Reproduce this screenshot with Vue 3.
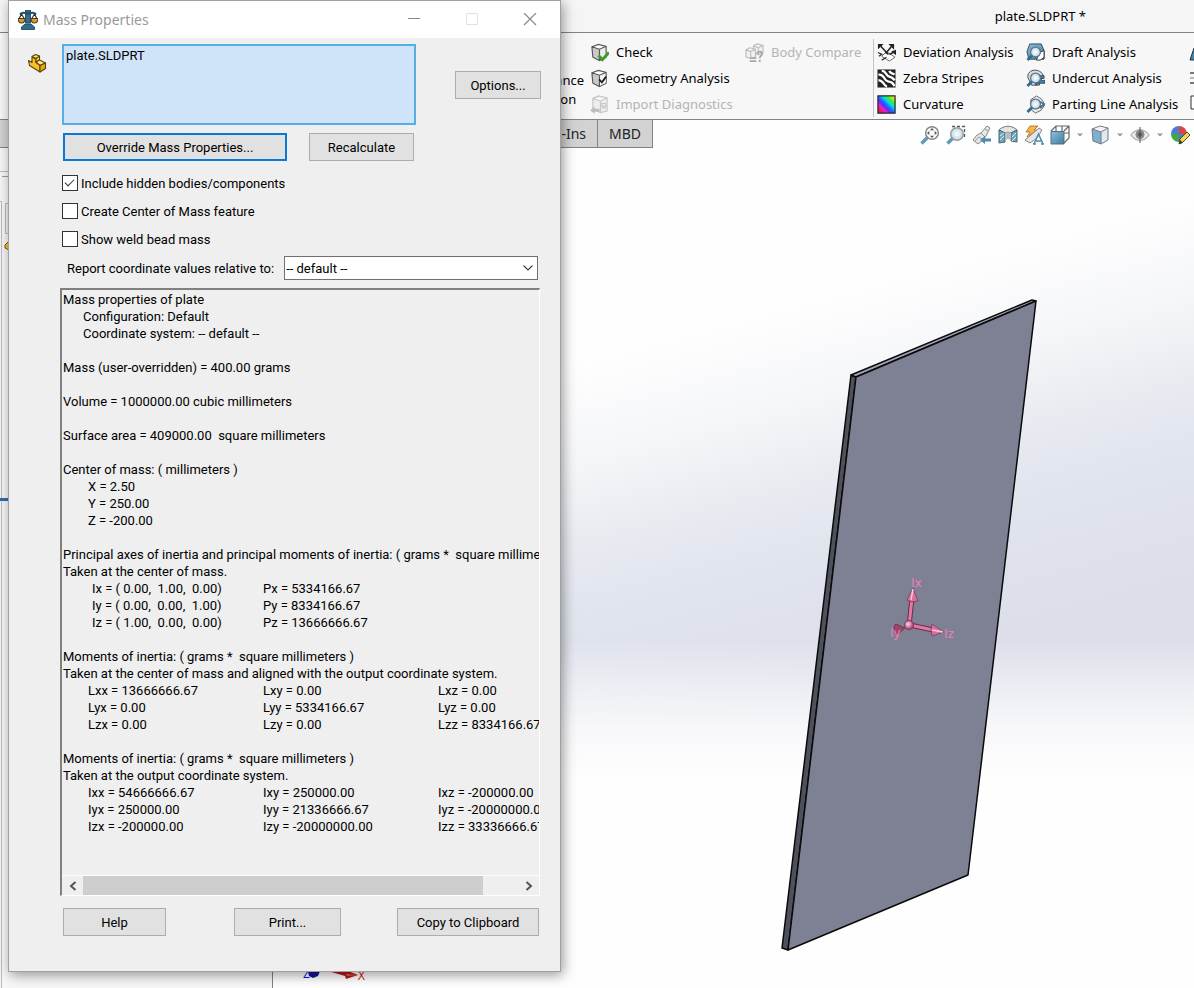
<script setup>
import { ref } from 'vue'

const includeHidden = ref(true)
const createFeature = ref(false)
const showWeld = ref(false)
const coordSystem = ref('default')

const ribbonGroups = [
  [
    { label: 'Check', icon: 'i-check' },
    { label: 'Geometry Analysis', icon: 'i-geometry' },
    { label: 'Import Diagnostics', icon: 'i-import', disabled: true },
  ],
  [{ label: 'Body Compare', icon: 'i-compare', disabled: true }],
  [
    { label: 'Deviation Analysis', icon: 'i-deviation' },
    { label: 'Zebra Stripes', icon: 'i-zebra' },
    { label: 'Curvature', icon: 'i-curvature' },
  ],
  [
    { label: 'Draft Analysis', icon: 'i-draft' },
    { label: 'Undercut Analysis', icon: 'i-undercut' },
    { label: 'Parting Line Analysis', icon: 'i-parting' },
  ],
]

const viewTools = [
  { label: 'Zoom to Fit', icon: 'v-fit' },
  { label: 'Zoom to Area', icon: 'v-area' },
  { label: 'Previous View', icon: 'v-previous' },
  { label: 'Section View', icon: 'v-section' },
  { label: 'Dynamic Annotation Views', icon: 'v-annotation' },
  { label: 'View Orientation', icon: 'v-orientation', menu: true },
  { label: 'Display Style', icon: 'v-display', menu: true },
  { label: 'Hide/Show Items', icon: 'v-eye', menu: true },
  { label: 'Edit Appearance', icon: 'v-appearance' },
]

const surfaceArea = 'Surface area = 409000.00  square millimeters'
const principalTitle =
  'Principal axes of inertia and principal moments of inertia: ( grams *  square millimeters )'
const momentsTitle = 'Moments of inertia: ( grams *  square millimeters )'

const principal = [
  ['Ix = ( 0.00,  1.00,  0.00)', 'Px = 5334166.67'],
  ['Iy = ( 0.00,  0.00,  1.00)', 'Py = 8334166.67'],
  ['Iz = ( 1.00,  0.00,  0.00)', 'Pz = 13666666.67'],
]
const centroidal = [
  ['Lxx = 13666666.67', 'Lxy = 0.00', 'Lxz = 0.00'],
  ['Lyx = 0.00', 'Lyy = 5334166.67', 'Lyz = 0.00'],
  ['Lzx = 0.00', 'Lzy = 0.00', 'Lzz = 8334166.67'],
]
const output = [
  ['Ixx = 54666666.67', 'Ixy = 250000.00', 'Ixz = -200000.00'],
  ['Iyx = 250000.00', 'Iyy = 21336666.67', 'Iyz = -20000000.00'],
  ['Izx = -200000.00', 'Izy = -20000000.00', 'Izz = 33336666.67'],
]
</script>

<template>
  <svg class="sprite" aria-hidden="true">
    <defs>
      <linearGradient id="g-curve" x1="0" y1="1" x2="1" y2="0">
        <stop offset=".08" stop-color="#f01030" />
        <stop offset=".26" stop-color="#f020c0" />
        <stop offset=".4" stop-color="#5030ff" />
        <stop offset=".52" stop-color="#1080ff" />
        <stop offset=".62" stop-color="#00e0e0" />
        <stop offset=".74" stop-color="#30f040" />
        <stop offset=".92" stop-color="#f0e020" />
      </linearGradient>
      <linearGradient id="g-steel" x1="0" y1="0" x2="1" y2="1">
        <stop offset="0" stop-color="#8fc0da" />
        <stop offset="1" stop-color="#3d7c9e" />
      </linearGradient>
      <radialGradient id="g-lens"><stop offset="0" stop-color="#fff" /><stop offset="1" stop-color="#b9d6e6" /></radialGradient>
      <radialGradient id="g-pink" cx=".4" cy=".4"><stop offset="0" stop-color="#ffd6ea" /><stop offset="1" stop-color="#b4557f" /></radialGradient>
    </defs>
    <symbol id="i-cube" viewBox="0 0 20 20">
      <path d="M2 4 9 1.500 17 3.500 10 6.500Z" fill="#fff" />
      <path d="M2 4 10 6.500V18.500L3 15Z" fill="#c9c9c9" />
      <path d="M10 6.500 17 3.500V15L10 18.500Z" fill="#ececec" />
      <path d="M2 4 9 1.500 17 3.500V15L10 18.500 3 15ZM2 4l8 2.500 7-3M10 6.500V18.500" fill="none" stroke="#555" stroke-width="1.200" />
    </symbol>
    <symbol id="i-check" viewBox="0 0 20 20">
      <use href="#i-cube" width="20" height="20" />
      <path d="M9 13l4 4.500L20 10" fill="none" stroke="#3a9a22" stroke-width="3" />
    </symbol>
    <symbol id="i-geometry" viewBox="0 0 20 20">
      <use href="#i-cube" width="20" height="20" />
      <path d="M10.500 7h6V14.500l-6 3Z" fill="#f6f6f6" />
      <path d="M9.500 11l3 3L17 8" fill="none" stroke="#222" stroke-width="2" />
    </symbol>
    <symbol id="i-import" viewBox="0 0 20 20">
      <g fill="#eee" stroke="#c6c6c6" stroke-width="1.200">
        <path d="M3 3.500 9 1l9 2v14l-7 1.500L3 15ZM3 3.500l8 3 7-3.500M11 6.500v12" />
        <path d="M12.500 9h4v3h-4zM12.500 13.500h4" />
      </g>
      <path d="M0 16l5-4v2.500h5v3H5V20Z" fill="#bdbdbd" />
    </symbol>
    <symbol id="i-compare" viewBox="0 0 20 20">
      <g fill="#f1f1f1" stroke="#bcbcbc" stroke-width="1.200">
        <path d="M9 3l4-2 6 1.500v8l-5 2-5-2ZM9 3l5 2 5-2.500M14 5v7" />
        <path d="M1 7l4-2 6 1.500v8l-5 2-5-2ZM1 7l5 2 5-2.500M6 9v7" />
      </g>
      <path d="M5 16h7M5 19h7" stroke="#aaa" stroke-width="1.800" />
      <path d="M13 11.500c0-3 5-3 5 0 0 2-2.500 2-2.500 4.500M15.500 17.500V20" fill="none" stroke="#aaa" stroke-width="2" />
    </symbol>
    <symbol id="i-deviation" viewBox="0 0 20 20">
      <path d="M5 14l5-5 9 6-6 4Z" fill="#fff" stroke="#666" />
      <path d="M12 12 4 3.500M9 11l6-7M13 12l4-2" stroke="#222" stroke-width="1.600" />
      <path d="M1 1h6L1 6.500ZM18 1h-6l6 6ZM20 7v6l-5-4Z" fill="#222" />
      <path d="M1 10l4 2-3 2M5 18l5-3" fill="none" stroke="#333" stroke-width="1.400" />
    </symbol>
    <symbol id="i-zebra" viewBox="0 0 20 20">
      <path d="M.5.5h19v19H.5z" fill="#222" />
      <path d="M1.500 6c7-1 5 6 10 7s5 2 7 5M5 2c5 0 4 5 8 6s4 2 5.500 4M1.500 12c5-1 5 5 9 6.500M13 2c1 3 3 2 5.500 4" fill="none" stroke="#fff" stroke-width="2.400" />
    </symbol>
    <symbol id="i-curvature" viewBox="0 0 20 20">
      <path d="M1 1h18v18H1z" fill="url(#g-curve)" stroke="#223" stroke-width="1.300" />
    </symbol>
    <symbol id="i-lens" viewBox="0 0 20 20">
      <path d="M6.500 13 1.500 18" stroke="#2f6e90" stroke-width="3" />
      <circle cx="10" cy="9.500" r="5.200" fill="url(#g-lens)" stroke="#5c7484" stroke-width="1.300" />
    </symbol>
    <symbol id="i-draft" viewBox="0 0 20 20">
      <path d="M4 1h12l3 7v9H3L1 9Z" fill="url(#g-steel)" stroke="#345" />
      <path d="M14 10l5-2v7l-4 3h-4Z" fill="#fff" stroke="#333" />
      <use href="#i-lens" width="20" height="20" />
    </symbol>
    <symbol id="i-undercut" viewBox="0 0 20 20">
      <path d="M2 9c-1-10 14-10 16-2l-2 3-2 7H6Z" fill="#ddd" stroke="#444" />
      <path d="M12 7h7v3h-3v2h4v3h-6l-4 2Z" fill="#3d86ad" stroke="#234" stroke-width=".8" />
      <use href="#i-lens" width="20" height="20" />
    </symbol>
    <symbol id="i-parting" viewBox="0 0 20 20">
      <path d="M5 5l6-4 5 3 4 6-4 6-6 3-4-3Z" fill="#ececec" stroke="#666" />
      <path d="M11 14c4-1 6-3 8-4M15 7l4 3-4 4" fill="none" stroke="#2f6e90" stroke-width="1.500" />
      <use href="#i-lens" width="20" height="20" />
    </symbol>

    <symbol id="v-fit" viewBox="0 0 20 20">
      <path d="M8 12 1.500 18.500" stroke="#5b9abb" stroke-width="3.400" />
      <circle cx="12" cy="8" r="6.300" fill="#f6fafc" stroke="#888" stroke-width="1.500" />
      <path d="M12 3l2 2.300h-4ZM12 13l2-2.300h-4ZM7 8l2.300-2v4ZM17 8l-2.300-2v4Z" fill="#555" />
    </symbol>
    <symbol id="v-area" viewBox="0 0 20 20">
      <path d="M6 1.500h12.500v12" fill="none" stroke="#555" stroke-width="1.300" stroke-dasharray="3 2" />
      <path d="M7 13 1.500 18.500" stroke="#5b9abb" stroke-width="3.400" />
      <circle cx="11" cy="9" r="6.300" fill="url(#g-lens)" stroke="#999" stroke-width="1.400" />
    </symbol>
    <symbol id="v-previous" viewBox="0 0 20 20">
      <path d="M1 15 5 10l4-2 6-7 3 2-4 8-3 4-5 4Z" fill="#e6e6e6" stroke="#888" />
      <path d="M3 16l4-4 3 2M9 8l4 4M13 4l3 2" fill="none" stroke="#999" />
      <path d="M8 15l5-4v2.500h6v3h-6V19Z" fill="#4b8cae" />
    </symbol>
    <symbol id="v-section" viewBox="0 0 20 20">
      <path d="M1 5c5-5 13-5 18 0l-6 3c-2-1-4-1-6 0Z" fill="#e4e4e4" stroke="#777" />
      <path d="M1 5l6 3v9l-6 1ZM13 8l6-3v12l-6-1Z" fill="#6ba6c4" stroke="#466" />
      <path d="M7 8c2-1 4-1 6 0v7c-2-1-4-1-6 0Z" fill="#bbb" />
      <path d="M2 11l4-3M2 15l4-4M14 12l4-4M14 16l4-4" stroke="#dcedf5" />
    </symbol>
    <symbol id="v-annotation" viewBox="0 0 20 20">
      <path d="M6 1h8l-4 4h3L3 12l3-5H2Z" fill="#f7b34c" stroke="#a76f1a" stroke-width=".8" />
      <path d="M1 15l6-5 8-7 3 2-5 8-7 5Z" fill="#e6e6e6" stroke="#888" />
      <path d="M10 19 14.500 9 19 19M12 16h5M9 19h3M17 19h3" fill="none" stroke="#4b8cae" stroke-width="1.500" />
    </symbol>
    <symbol id="v-orientation" viewBox="0 0 20 20">
      <path d="M1 6 6 1h13v12l-5 5M6 1v5M14 6l5-5M12 1v12M12 8h7" fill="none" stroke="#666" stroke-width="1.200" />
      <path d="M1 6.500h13V19H1z" fill="url(#g-steel)" stroke="#47738a" />
    </symbol>
    <symbol id="v-display" viewBox="0 0 20 20">
      <path d="M2 4l8-3 8 2-7 4Z" fill="#f4f4f4" />
      <path d="M2 4l9 3v12l-8-3Z" fill="#7db2cc" />
      <path d="M11 7l7-4v12l-7 4Z" fill="#dfe9ee" />
      <path d="M2 4l8-3 8 2v12l-7 4-8-3ZM2 4l9 3 7-4M11 7v12" fill="none" stroke="#778" />
    </symbol>
    <symbol id="v-eye" viewBox="0 0 20 20">
      <path d="M1 10c5-7 13-7 18 0-5 7-13 7-18 0Z" fill="#eee" stroke="#bbb" stroke-width="1.300" />
      <circle cx="10" cy="9.500" r="4.500" fill="#888" />
      <circle cx="10" cy="9.500" r="2" fill="#555" />
      <path d="M10 2v16" stroke="#555" />
    </symbol>
    <symbol id="v-appearance" viewBox="0 0 20 20">
      <path d="M9 9V1a8 8 0 0 0-8 8Z" fill="#4a7fd0" />
      <path d="M9 9h8a8 8 0 0 0-8-8Z" fill="#de4444" />
      <path d="M9 9H1a8 8 0 0 0 8 8Z" fill="#42a845" />
      <path d="M9 9h8a8 8 0 0 1-8 8Z" fill="#4a7fd0" />
      <path d="M9 19l1-5 7-7 3 3-7 7Z" fill="#f5d45a" stroke="#5a4a22" />
      <path d="M9 19l1-4 3 3Z" fill="#333" />
    </symbol>
  </svg>

  <div class="app">
    <header class="titlebar">plate.SLDPRT *</header>

    <nav class="ribbon" aria-label="Evaluate">
      <button class="evaluate" type="button">Performance<br />Evaluation</button>
      <div v-for="(group, g) in ribbonGroups" :key="g" class="group" :class="{ divided: g === 2 }">
        <button v-for="item in group" :key="item.label" class="tool" type="button" :disabled="item.disabled">
          <svg class="tool-icon" aria-hidden="true"><use :href="'#' + item.icon" /></svg>
          <span>{{ item.label }}</span>
        </button>
      </div>
      <div class="group more" aria-hidden="true">
        <svg class="more-icon" viewBox="0 0 10 78">
          <path d="M1 21 5 9h5v12Z" fill="#3d86ad" stroke="#234" />
          <path d="M1 34h9M1 44h9" stroke="#777" stroke-width="2" />
          <path d="M1 39h9" stroke="#bbb" stroke-width="2" />
          <path d="M2 57h10v13H2z" fill="#fff" stroke="#333" />
        </svg>
      </div>
    </nav>

    <main class="workspace">
      <aside class="tree">
        <svg class="tree-marks" viewBox="0 0 12 840" aria-hidden="true">
          <path d="M0 23.500h12" stroke="#bbb" />
          <path d="M2 28.500h10" stroke="#999" />
          <path d="M0 53.500h1.500V840" fill="none" stroke="#bbb" />
          <path d="M5.500 55.500h8v30h-8z" fill="#f0f0f0" stroke="#bbb" />
          <path d="M8 62h4v4H8z" fill="#2d6f9c" />
          <path d="M5 97l4-4v9l-4-2Z" fill="#f2c029" stroke="#7a5a0a" />
          <path d="M0 351.500h12" stroke="#2a6fae" stroke-width="3" />
        </svg>
      </aside>

      <section class="viewport" aria-label="Model view">
        <svg class="model" viewBox="273 120 921 868" role="img" aria-label="Rectangular plate with principal axes">
          <g stroke="#0a0a0a" stroke-width="1.500" stroke-linejoin="round">
            <path d="M851 375 856 377 788 950 782 948Z" fill="#4e505c" />
            <path d="M851 375 1032 300 1036 301 856 377Z" fill="#9ea1b5" />
            <path d="M856 377 1036 301 968 875 788 950Z" fill="#7e8093" />
          </g>
          <path d="M909 626 912 598" stroke="#6d2b48" stroke-width="5" />
          <path d="M909 626 912 598" stroke="#dd7ba6" stroke-width="3" />
          <path d="M910 625 933 630" stroke="#6d2b48" stroke-width="5" />
          <path d="M910 625 933 630" stroke="#dd7ba6" stroke-width="3" />
          <path d="M913 588 907 600l5 2 6-1Z" fill="#d4709b" stroke="#6d2b48" stroke-width=".6" />
          <path d="M944 632 932 624l-1 6 1 6Z" fill="#d4709b" stroke="#6d2b48" stroke-width=".6" />
          <path d="M913 589 911 600M943 632 932 630" stroke="#ffc4de" stroke-width="1.500" />
          <path d="M905 628 896 624c-3 2-2 8 1 11Z" fill="#a04468" stroke="#54203a" stroke-width=".6" />
          <circle cx="909" cy="625" r="4.500" fill="url(#g-pink)" stroke="#6d2b48" stroke-width=".8" />
          <g class="axis-label">
            <text x="911" y="587">Ix</text>
            <text x="890" y="637">Iy</text>
            <text x="944" y="638">Iz</text>
          </g>
          <path d="M308 971h12l-2 5-5 2-4-2Z" fill="#14149a" />
          <path d="M328 971h20l10 4-12 4-1-3Z" fill="#b81818" />
          <path d="M346 974l12 1-11 1Z" fill="#e86060" />
          <text class="triad z" x="303" y="978">Z</text>
          <text class="triad x" x="358" y="980">X</text>
        </svg>
      </section>

      <div class="tabs">
        <button type="button" class="tab wide">SOLIDWORKS Add-Ins</button>
        <button type="button" class="tab">MBD</button>
      </div>

      <div class="view-tools">
        <template v-for="tool in viewTools" :key="tool.label">
          <button type="button" class="view-tool" :aria-label="tool.label">
            <svg class="view-icon" aria-hidden="true"><use :href="'#' + tool.icon" /></svg>
          </button>
          <span v-if="tool.menu" class="caret"></span>
        </template>
      </div>
    </main>

    <section class="dialog" role="dialog" aria-labelledby="dialog-title">
      <header class="dialog-title">
        <svg class="scale-icon" viewBox="0 0 20 20" aria-hidden="true">
          <path d="M7.500 0h5v13h-5z" fill="#2d6d92" stroke="#153a52" stroke-width=".8" />
          <path d="M3.500 19.500v-2.500L7 14h6l3.500 3v2.500Z" fill="#2d6d92" stroke="#153a52" stroke-width=".8" />
          <path d="M2 4.500C5 1 7 3.500 10 3.500S15 1 18 4.500" fill="none" stroke="#1f4f70" stroke-width="2.200" />
          <path d="M3.500 4 1 9M3.500 4 6.500 9M16.500 4 13.500 9M16.500 4 19 9" stroke="#333" stroke-width="1.200" />
          <path d="M0 8.500h7c0 6-7 6-7 0ZM13 8.500h7c0 6-7 6-7 0Z" fill="#d59a2a" stroke="#4a3a1c" stroke-width="1.100" />
        </svg>
        <h1 id="dialog-title">Mass Properties</h1>
        <div class="window-buttons">
          <button type="button" aria-label="Minimize"><svg viewBox="0 0 14 14"><path d="M1 5.500h12" stroke="#888" /></svg></button>
          <button type="button" aria-label="Maximize" disabled><svg viewBox="0 0 14 14"><path d="M1.500 .5h11v11h-11z" fill="none" stroke="#e2e2e2" /></svg></button>
          <button type="button" aria-label="Close"><svg viewBox="0 0 14 14"><path d="M1 0l12 12M13 0 1 12" stroke="#888" stroke-width="1.200" /></svg></button>
        </div>
      </header>

      <div class="dialog-body">
        <div class="selection">
          <svg class="part-icon" viewBox="0 0 20 20" aria-hidden="true">
            <g stroke="#5a4308" stroke-width="1.100" stroke-linejoin="round">
              <path d="M1.500 7.500 5 9.500V4L9 6v3.500l4 2.500v7L2.500 12.500Z" fill="#f5c223" />
              <path d="M5 3.500 8.500 1.500 12.500 3v4L9 9V5.500Z" fill="#fbd94a" />
              <path d="M5 3.500 9 5.500 12.500 3M9 9l3.500-2 6 3-5.500 2.500Z" fill="#fde98a" />
              <path d="M13 12.500 18.500 10v5.500L13 19Z" fill="#e3a812" />
            </g>
          </svg>
          <div class="selection-list" role="listbox" aria-label="Selected items">
            <div role="option" aria-selected="true">plate.SLDPRT</div>
          </div>
          <button type="button" class="btn options">Options...</button>
        </div>

        <div class="actions">
          <button type="button" class="btn override">Override Mass Properties...</button>
          <button type="button" class="btn recalc">Recalculate</button>
        </div>

        <div class="checks">
          <label><input v-model="includeHidden" type="checkbox" />Include hidden bodies/components</label>
          <label><input v-model="createFeature" type="checkbox" />Create Center of Mass feature</label>
          <label><input v-model="showWeld" type="checkbox" />Show weld bead mass</label>
        </div>

        <div class="coords">
          <label for="coord">Report coordinate values relative to:</label>
          <div class="select-wrap">
            <select id="coord" v-model="coordSystem">
              <option value="default">-- default --</option>
            </select>
            <svg class="chevron" viewBox="0 0 10 6" aria-hidden="true"><path d="M.5.5 5 5 9.500.5" fill="none" stroke="#444" stroke-width="1.200" /></svg>
          </div>
        </div>

        <div class="report">
          <div class="report-text">
            <p>Mass properties of plate</p>
            <p class="in1">Configuration: Default</p>
            <p class="in1">Coordinate system: -- default --</p>
            <p class="gap">Mass (user-overridden) = 400.00 grams</p>
            <p class="gap">Volume = 1000000.00 cubic millimeters</p>
            <p class="gap">{{ surfaceArea }}</p>
            <p class="gap">Center of mass: ( millimeters )</p>
            <p class="in2">X = 2.50</p>
            <p class="in2">Y = 250.00</p>
            <p class="in2">Z = -200.00</p>
            <p class="gap">{{ principalTitle }}</p>
            <p>Taken at the center of mass.</p>
            <table class="axes">
              <tbody>
                <tr v-for="row in principal" :key="row[0]"><td v-for="cell in row" :key="cell">{{ cell }}</td></tr>
              </tbody>
            </table>
            <p class="gap">{{ momentsTitle }}</p>
            <p>Taken at the center of mass and aligned with the output coordinate system.</p>
            <table>
              <tbody>
                <tr v-for="row in centroidal" :key="row[0]"><td v-for="cell in row" :key="cell">{{ cell }}</td></tr>
              </tbody>
            </table>
            <p class="gap">{{ momentsTitle }}</p>
            <p>Taken at the output coordinate system.</p>
            <table>
              <tbody>
                <tr v-for="row in output" :key="row[0]"><td v-for="cell in row" :key="cell">{{ cell }}</td></tr>
              </tbody>
            </table>
          </div>
          <div class="scrollbar">
            <button type="button" aria-label="Scroll left"><svg viewBox="0 0 8 10"><path d="M6.500 1 2 5l4.500 4" fill="none" stroke="#555" stroke-width="2" /></svg></button>
            <div class="track"><div class="thumb"></div></div>
            <button type="button" aria-label="Scroll right"><svg viewBox="0 0 8 10"><path d="M1.500 1 6 5 1.500 9" fill="none" stroke="#555" stroke-width="2" /></svg></button>
          </div>
        </div>

        <footer class="footer">
          <button type="button" class="btn help">Help</button>
          <button type="button" class="btn print">Print...</button>
          <button type="button" class="btn copy">Copy to Clipboard</button>
        </footer>
      </div>
    </section>
  </div>
</template>

<style>
body {
  margin: 0;
}
</style>

<style scoped>
.sprite {
  position: absolute;
  width: 0;
  height: 0;
}
.app {
  position: relative;
  display: flex;
  flex-direction: column;
  min-height: 100vh;
  overflow: hidden;
  background: #f7f7f7;
  color: #000;
  font: 13px/17px "Noto Sans", "Open Sans", sans-serif;
}
button,
select {
  margin: 0;
  padding: 0;
  border: 0;
  background: none;
  color: inherit;
  font: inherit;
}
.titlebar {
  display: flex;
  justify-content: flex-end;
  padding: 8px 108px 7px 0;
  border-bottom: 1px solid #828282;
  background: #f5f5f5;
}
.ribbon {
  display: grid;
  grid-template-columns: 590px 155px 128px 153px 163px 1fr;
  padding: 6px 0 2px;
  border-bottom: 1px solid #828282;
  overflow: hidden;
}
.evaluate {
  align-self: end;
  justify-self: end;
  margin: 0 6px 8px 0;
  line-height: 19px;
}
.group {
  display: grid;
  grid-template-rows: repeat(3, 26px);
  min-width: 0;
}
.divided {
  padding-left: 3px;
  border-left: 1px solid #c4c4c4;
}
.tool {
  display: flex;
  align-items: center;
  gap: 7px;
  white-space: nowrap;
}
.tool:disabled {
  color: #b4b4b4;
}
.tool-icon {
  flex: none;
  width: 19px;
  height: 19px;
}
.more-icon {
  width: 10px;
  height: 78px;
}
.workspace {
  position: relative;
  display: flex;
  flex: 1;
}
.tree {
  width: 272px;
  border-right: 1px solid #828282;
  background: #f7f7f7;
}
.tree-marks {
  display: block;
  width: 12px;
  margin-top: 28px;
}
.viewport {
  flex: 1;
  background:
    linear-gradient(180deg, rgba(254, 254, 254, 0) 60%, rgba(254, 254, 254, 0.45) 65%, rgba(254, 254, 254, 0.8) 70%, #fefefe 76%),
    linear-gradient(165deg, #fefefe 29%, #f5f6f9 38%, #e9ebf1 45%, #e1e5ee 51%, #dcdeea 64%);
}
.model {
  display: block;
  width: 100%;
}
.axis-label {
  fill: #f77fb8;
  font: 13px "Open Sans", sans-serif;
}
.triad {
  font: 12px "Open Sans", sans-serif;
}
.triad.z {
  fill: #1010f0;
}
.triad.x {
  fill: #e01010;
}
.tabs {
  position: absolute;
  top: 0;
  left: 0;
  display: flex;
  color: #222;
  font-size: 14px;
}
.tab {
  height: 28px;
  padding: 0 11px;
  border: solid #828282;
  border-width: 0 1px 1px 0;
  background: #d2d2d2;
}
.wide {
  width: 598px;
  text-align: right;
}
.view-tools {
  position: absolute;
  top: 5px;
  right: 4px;
  display: flex;
  align-items: center;
  gap: 6px;
}
.view-icon {
  display: block;
  width: 20px;
  height: 20px;
}
.caret {
  width: 0;
  border: solid transparent;
  border-width: 4px 4px 0;
  border-top-color: #999;
  transform: scale(0.75);
}

.dialog {
  position: absolute;
  top: 0;
  left: 8px;
  width: 551px;
  border: 1px solid #a0a0a0;
  background: #efefef;
  box-shadow: 2px 3px 12px rgba(0, 0, 0, 0.4);
  font-family: Roboto, "Noto Sans", sans-serif;
}
.dialog-title {
  display: flex;
  align-items: center;
  height: 37px;
  padding: 0 23px 0 9px;
  background: #fff;
  color: #999;
}
.scale-icon {
  width: 20px;
  height: 20px;
}
h1 {
  flex: 1;
  margin: 0 0 0 5px;
  font: 14px/17px "Noto Sans", "Open Sans", sans-serif;
}
.window-buttons {
  display: flex;
  gap: 44px;
}
.window-buttons svg {
  display: block;
  width: 14px;
  height: 14px;
}
.dialog-body {
  padding: 6px 19px 35px 53px;
}
.selection {
  position: relative;
  display: flex;
  justify-content: space-between;
  align-items: flex-start;
}
.part-icon {
  position: absolute;
  top: 9px;
  left: -35px;
  width: 20px;
  height: 20px;
}
.selection-list {
  flex: none;
  width: 354px;
  height: 81px;
  box-sizing: border-box;
  padding: 1px 2px;
  border: 2px solid #55aee4;
  background: #cfe4f8;
}
.btn {
  height: 28px;
  border: 1px solid #adadad;
  background: #e1e1e1;
}
.options {
  width: 86px;
  margin-top: 27px;
}
.actions {
  display: flex;
  gap: 22px;
  margin: 8px 0 0 1px;
}
.override {
  width: 224px;
  border: 2px solid #0a78d6;
}
.recalc {
  width: 105px;
}
.checks {
  display: flex;
  flex-direction: column;
  margin-top: 8px;
}
.checks label {
  display: flex;
  align-items: center;
  gap: 3px;
  height: 28px;
}
.checks input {
  appearance: none;
  box-sizing: border-box;
  width: 16px;
  height: 16px;
  margin: 0;
  border: 1px solid #333;
  background: #fff;
}
.checks input:checked::before {
  content: "";
  display: block;
  width: 8px;
  height: 4px;
  margin: 3px 2px;
  border: solid #333;
  border-width: 0 0 1px 1px;
  transform: rotate(-45deg);
}
.coords {
  display: flex;
  align-items: center;
  gap: 10px;
  margin-top: 3px;
  padding: 0 3px 0 5px;
}
.select-wrap {
  position: relative;
  flex: 1;
}
select {
  display: block;
  width: 100%;
  height: 24px;
  padding: 0 1px;
  appearance: none;
  border: 1px solid #707070;
  background: #fff;
}
.chevron {
  position: absolute;
  top: 9px;
  right: 5px;
  width: 10px;
  height: 6px;
}
.report {
  margin: 8px 1px 0 -2px;
  border: solid;
  border-width: 2px 1px 1px 2px;
  border-color: #808080 #fff #fff #808080;
}
.report-text {
  min-height: 585px;
  padding: 1px 0 0 1px;
  box-sizing: border-box;
  overflow: hidden;
  white-space: pre;
}
p {
  margin: 0;
}
.in1 {
  padding-left: 20px;
}
.in2 {
  padding-left: 25px;
}
.gap {
  margin-top: 17px;
}
table {
  width: 525px;
  margin-left: 25px;
  border-collapse: collapse;
  table-layout: fixed;
}
td {
  width: 175px;
  padding: 0;
}
.axes {
  width: 346px;
  margin-left: 29px;
}
.axes td:first-child {
  width: 171px;
}
.scrollbar {
  display: flex;
  height: 19px;
  border-top: 1px solid #fff;
}
.scrollbar button {
  width: 21px;
}
.scrollbar svg {
  display: block;
  width: 8px;
  height: 10px;
  margin: 0 auto;
}
.track {
  flex: 1;
}
.thumb {
  width: 92%;
  height: 100%;
  background: #cdcdcd;
}
.footer {
  display: flex;
  margin: 12px 2px 0 1px;
}
.help {
  width: 103px;
  margin-right: 68px;
}
.print {
  width: 107px;
}
.copy {
  width: 142px;
  margin-left: auto;
}
</style>
